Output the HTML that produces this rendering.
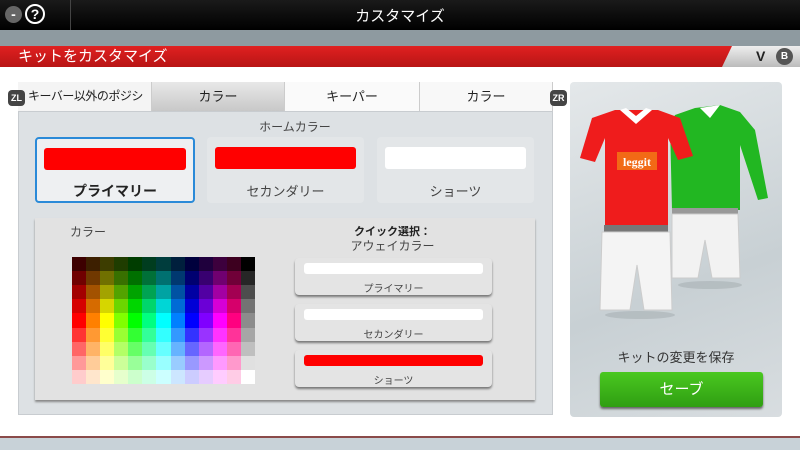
<!DOCTYPE html>
<html><head><meta charset="utf-8"><style>
*{margin:0;padding:0;box-sizing:border-box}
body{width:800px;height:450px;overflow:hidden;position:relative;background:#fff;font-family:"Liberation Sans","Noto Sans CJK JP",sans-serif}
.a{position:absolute}
.top{left:0;top:0;width:800px;height:30px;background:linear-gradient(#1a1a1a,#000)}
.strip{left:0;top:30px;width:800px;height:16px;background:#8e9aa0}
.red{left:0;top:46px;width:800px;height:21px;background:linear-gradient(#e02020,#b81515);color:#fff;font-size:15px;line-height:21px;padding-left:18px}
.vb{left:722px;top:46px;width:78px;height:21px;background:linear-gradient(#eee,#bbb);clip-path:polygon(10px 0,100% 0,100% 100%,0 100%)}
.tab{top:82px;height:29px;font-size:13px;line-height:29px;text-align:center;color:#222;border-right:1px solid #ccc;overflow:hidden;white-space:nowrap}
.panel{left:18px;top:111px;width:535px;height:304px;background:#dde1e4;border:1px solid #c8ccd0}
.btn{background:#e3e6e8;border-radius:4px;text-align:center;font-size:13px;color:#444}
.bar{position:absolute;border-radius:3px}
.qb{left:295px;width:197px;height:37px;background:#e4e4e4;border-radius:4px;box-shadow:0 2px 2px #777;font-size:10px;color:#444;text-align:center}
.zr{width:17px;height:16px;background:#444;color:#fff;font-size:9px;font-weight:bold;border-radius:4px;text-align:center;line-height:16px}
</style></head><body>
<div class="a top"></div>
<div class="a" style="left:5px;top:6px;width:17px;height:17px;border-radius:50%;background:#666;color:#fff;font-size:14px;line-height:16px;text-align:center;font-weight:bold">-</div>
<div class="a" style="left:25px;top:4px;width:20px;height:20px;border-radius:50%;border:2px solid #fff;color:#fff;font-size:14px;line-height:16px;text-align:center;font-weight:bold">?</div>
<div class="a" style="left:70px;top:0;width:1px;height:30px;background:#444"></div>
<div class="a" style="left:300px;top:5px;width:200px;text-align:center;color:#fff;font-size:15px">カスタマイズ</div>
<div class="a strip"></div>
<div class="a red">キットをカスタマイズ</div>
<div class="a vb"><span style="position:absolute;left:34px;top:2px;font-weight:bold;font-size:14px;color:#222">V</span><span style="position:absolute;left:54px;top:2px;width:17px;height:17px;border-radius:50%;background:#555;color:#fff;font-size:10px;line-height:17px;text-align:center;font-weight:bold">B</span></div>

<div class="a tab" style="left:18px;width:134px;background:#f4f4f4;text-align:left;padding-left:10px;font-size:12px;letter-spacing:-0.5px">キーバー以外のポジシ</div>
<div class="a tab" style="left:152px;width:133px;background:linear-gradient(#e8e8e8,#c8c8c8)">カラー</div>
<div class="a tab" style="left:285px;width:135px;background:#fafafa">キーパー</div>
<div class="a tab" style="left:420px;width:133px;background:#f8f8f8">カラー</div>
<div class="a zr" style="left:8px;top:90px">ZL</div>
<div class="a zr" style="left:550px;top:90px">ZR</div>

<div class="a panel"></div>
<div class="a" style="left:200px;top:118px;width:190px;text-align:center;font-size:12px;color:#444">ホームカラー</div>
<div class="a btn" style="left:35px;top:137px;width:160px;height:66px;border:2px solid #2a8ad8;background:#eef0f2"><div class="bar" style="left:7px;top:9px;width:142px;height:22px;background:#f00"></div><div style="position:absolute;top:42px;width:100%;font-size:14px;font-weight:bold;color:#222">プライマリー</div></div>
<div class="a btn" style="left:207px;top:137px;width:157px;height:66px"><div class="bar" style="left:8px;top:10px;width:141px;height:22px;background:#f00"></div><div style="position:absolute;top:44px;width:100%">セカンダリー</div></div>
<div class="a btn" style="left:377px;top:137px;width:157px;height:66px"><div class="bar" style="left:8px;top:10px;width:141px;height:22px;background:#fff"></div><div style="position:absolute;top:44px;width:100%">ショーツ</div></div>

<div class="a" style="left:35px;top:218px;width:500px;height:182px;background:#e2e2e2;box-shadow:0 2px 2px #888"></div>
<div class="a" style="left:70px;top:223px;font-size:12px;color:#444">カラー</div>
<div class="a" id="pal" style="left:72px;top:257px;width:183px;height:127px;display:grid;grid-template-columns:repeat(13,1fr);grid-template-rows:repeat(9,1fr)"></div>
<div class="a" style="left:300px;top:223px;width:185px;text-align:center;font-size:11px;font-weight:bold;color:#222">クイック選択：</div>
<div class="a" style="left:300px;top:237px;width:185px;text-align:center;font-size:12px;color:#444">アウェイカラー</div>
<div class="a qb" style="top:258px"><div class="bar" style="left:9px;top:5px;width:179px;height:11px;background:#fff"></div><div style="position:absolute;top:22px;width:100%">プライマリー</div></div>
<div class="a qb" style="top:304px"><div class="bar" style="left:9px;top:5px;width:179px;height:11px;background:#fff"></div><div style="position:absolute;top:22px;width:100%">セカンダリー</div></div>
<div class="a qb" style="top:350px"><div class="bar" style="left:9px;top:5px;width:179px;height:11px;background:#f00"></div><div style="position:absolute;top:22px;width:100%">ショーツ</div></div>

<div class="a" style="left:570px;top:82px;width:212px;height:335px;background:linear-gradient(160deg,#e4e8ea,#c8d0d4 60%,#d8dde0);border-radius:4px"></div>
<svg class="a" style="left:580px;top:100px" width="200" height="230" viewBox="0 0 200 230">
<ellipse cx="60" cy="215" rx="35" ry="4" fill="#a8b0b4" opacity=".6"/>
<ellipse cx="130" cy="185" rx="32" ry="4" fill="#a8b0b4" opacity=".6"/>
<path d="M115 8 L95 15 L90 25 L92 110 L160 110 L160 45 L178 100 L188 98 L175 30 L160 12 L140 5 Z" fill="#22b722"/>
<path d="M120 8 L140 5 L130 18 Z" fill="#fff"/>
<rect x="92" y="108" width="66" height="8" fill="#999"/>
<path d="M92 114 L158 114 L160 178 L132 178 L125 140 L118 178 L92 178 Z" fill="#f2f2f2" stroke="#ccc"/>
<path d="M35 10 L12 18 L0 58 L15 62 L25 38 L25 125 L88 125 L88 38 L98 60 L113 56 L100 18 L78 10 Z" fill="#ef1c1c"/>
<path d="M40 10 L56 24 L72 10 L66 8 L56 16 L46 8 Z" fill="#fff"/>
<rect x="37" y="52" width="40" height="18" fill="#f26a16"/>
<text x="57" y="66" font-size="12" font-weight="bold" fill="#fff" text-anchor="middle" font-family="Liberation Serif,serif">leggit</text>
<rect x="24" y="125" width="64" height="8" fill="#777"/>
<path d="M22 132 L90 132 L92 210 L64 210 L57 165 L50 210 L20 210 Z" fill="#f4f4f4" stroke="#ccc"/>
</svg>
<div class="a" style="left:570px;top:347px;width:212px;text-align:center;font-size:13px;color:#333">キットの変更を保存</div>
<div class="a" style="left:600px;top:372px;width:163px;height:35px;background:linear-gradient(#4ac820,#2f9e12);border-radius:3px;box-shadow:0 2px 2px #666;color:#fff;font-size:15px;text-align:center;line-height:35px">セーブ</div>

<div class="a" style="left:0;top:436px;width:800px;height:2px;background:#8a4a4a"></div>
<div class="a" style="left:0;top:438px;width:800px;height:12px;background:#c8d2d8"></div>
<script>
var p=document.getElementById('pal'),L=[12,22,32,42,50,60,70,80,90],G=[0,15,30,45,55,65,75,88,100],h='';
for(var r=0;r<9;r++){for(var c=0;c<13;c++){var col=c<12?'hsl('+(c*30)+',100%,'+L[r]+'%)':'hsl(0,0%,'+G[r]+'%)';h+='<div style="background:'+col+'"></div>';}}
p.innerHTML=h;
</script>
</body></html>
